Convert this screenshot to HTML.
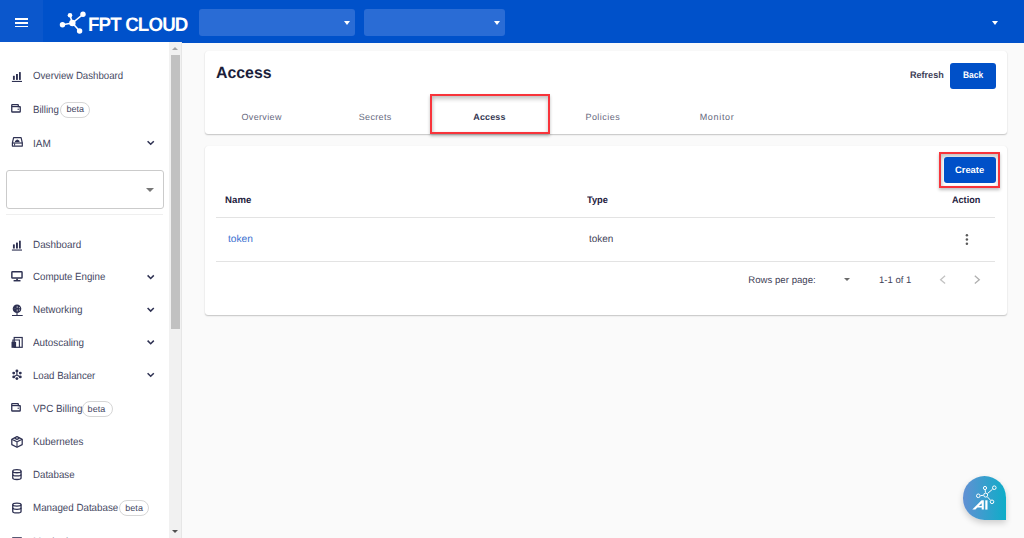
<!DOCTYPE html>
<html><head><meta charset="utf-8">
<style>
html,body{margin:0;padding:0;width:1024px;height:538px;overflow:hidden;background:#fafafa;font-family:"Liberation Sans",sans-serif;}
.t{position:absolute;white-space:nowrap;transform-origin:0 0;text-rendering:geometricPrecision;font-family:"Liberation Sans",sans-serif;}
.a{position:absolute;}
#hdr{left:0;top:0;width:1024px;height:42.5px;background:#0051ca;}
#ham{left:0;top:0;width:43px;height:42.5px;background:#0b57cc;}
.hl{position:absolute;left:14.9px;width:13.2px;height:1.7px;background:#fff;}
.dd{position:absolute;top:9px;height:27px;background:#2a6cd5;border-radius:3px;}
.tri{position:absolute;width:0;height:0;border-left:3.5px solid transparent;border-right:3.5px solid transparent;border-top:4px solid #fff;}
#side{left:0;top:42px;width:169px;height:496px;background:#fff;}
#track{left:169px;top:42px;width:12px;height:496px;background:#f1f1f1;}
#sbline{left:181px;top:42px;width:1px;height:496px;background:#e6e6e6;}
#thumb{left:171px;top:55px;width:9px;height:274px;background:#c1c1c1;}
.card{position:absolute;background:#fff;border-radius:3px;box-shadow:0 1px 1.5px rgba(0,0,0,0.22),0 0 1px rgba(0,0,0,0.07);}
.badge{position:absolute;height:14px;border:1px solid #d6d6d6;border-radius:8px;background:#fff;}
.btn{position:absolute;background:#0050c8;border-radius:3px;}
.red{position:absolute;border:2px solid #f8343b;box-sizing:border-box;box-shadow:0 2px 3px rgba(0,0,0,0.25), inset 0 3px 4px rgba(0,0,0,0.22), inset 2px 0 3px rgba(0,0,0,0.05);}
.hr{position:absolute;height:1px;background:#e3e3e3;}
.ic{position:absolute;}
</style></head><body>
<div id="hdr" class="a"></div>
<div id="ham" class="a">
  <div class="hl" style="top:18.3px"></div><div class="hl" style="top:21.95px"></div><div class="hl" style="top:25.5px"></div>
</div>
<!-- logo -->
<svg class="ic" style="left:55px;top:5px" width="40" height="32" viewBox="55 5 40 32">
  <g stroke="#fff" stroke-width="1.6" fill="none">
    <line x1="72.4" y1="23" x2="62.5" y2="24.8"/>
    <line x1="72.4" y1="23" x2="70" y2="15.3"/>
    <line x1="72.4" y1="23" x2="83" y2="14.3"/>
    <line x1="72.4" y1="23" x2="79.6" y2="31"/>
  </g>
  <g fill="#fff">
    <circle cx="72.4" cy="23" r="3.2"/>
    <circle cx="62.5" cy="24.8" r="2.7"/>
    <circle cx="70" cy="15.3" r="2.3"/>
    <circle cx="83" cy="14.3" r="2.7"/>
    <circle cx="79.6" cy="31" r="2.7"/>
  </g>
</svg>
<div class="t" style="left:88.3px;top:14.7px;font-size:19.5px;line-height:20px;font-weight:700;color:#fff;letter-spacing:-0.9px;transform:scaleX(0.962)">FPT CLOUD</div>
<div class="dd" style="left:199px;width:156px"></div>
<div class="tri" style="left:343.5px;top:21px"></div>
<div class="dd" style="left:364px;width:141px"></div>
<div class="tri" style="left:493.5px;top:21px"></div>
<div class="tri" style="left:992px;top:21px"></div>

<div id="side" class="a"></div>
<div id="track" class="a"></div>
<div id="sbline" class="a"></div>
<div id="thumb" class="a"></div>
<div class="a" style="left:172.1px;top:47.4px;width:0;height:0;border-left:3.2px solid transparent;border-right:3.2px solid transparent;border-bottom:3.4px solid #a3a3a3"></div>
<div class="a" style="left:172.1px;top:529.6px;width:0;height:0;border-left:3.2px solid transparent;border-right:3.2px solid transparent;border-top:3.4px solid #505050"></div>

<!-- sidebar select -->
<div class="a" style="left:6px;top:170px;width:156px;height:37px;border:1px solid #cbcbcb;border-radius:3px;"></div>
<div class="a" style="left:146px;top:187.5px;width:0;height:0;border-left:4px solid transparent;border-right:4px solid transparent;border-top:4px solid #777"></div>
<div class="hr" style="left:6px;top:213.8px;width:157px;height:1.6px;background:#efefef"></div>

<div class="badge" style="left:60.4px;top:101.5px;width:28px"></div>
<div class="badge" style="left:81.6px;top:400.9px;width:29px"></div>
<div class="badge" style="left:119.3px;top:499.8px;width:28px"></div>

<svg class="ic" style="left:0;top:0" width="170" height="538" viewBox="0 0 170 538"><rect x="12.95" y="75.8" width="1.85" height="4.1000000000000085" fill="#2e3152"/><rect x="16.0" y="74.0" width="1.9" height="5.900000000000006" fill="#2e3152"/><rect x="19.0" y="72.1" width="1.8" height="7.800000000000011" fill="#2e3152"/><rect x="11.9" y="80.9" width="10.1" height="1.1" fill="#2e3152"/><g transform="translate(0,0)"><path d="M11.75 106 V111.4 Q11.75 112 12.4 112 H19.6 Q20.25 112 20.25 111.4 V107.3 Q20.25 106.7 19.6 106.7 H18.3 V105.1 Q18.3 104.55 17.7 104.55 H12.4 Q11.75 104.55 11.75 105.1 Z" fill="none" stroke="#2e3152" stroke-width="1.3"/><line x1="11.75" y1="106.6" x2="20.2" y2="106.6" stroke="#2e3152" stroke-width="1.2"/><circle cx="18.2" cy="109.2" r="0.7" fill="#2e3152"/></g><path d="M13.6 137.6 H21.1 L22.3 142.9 V146.1 H12.4 V142.9 Z" fill="none" stroke="#2e3152" stroke-width="1.2" stroke-linejoin="round"/><line x1="12.4" y1="143" x2="22.3" y2="143" stroke="#2e3152" stroke-width="1.2"/><rect x="14.1" y="143.4" width="1.0" height="2.3" fill="#2e3152"/><path d="M14.9 141.9 Q14.9 140.3 16.2 140.2 Q17.0 138.8 18.3 139.9 Q19.8 140.2 19.6 141.9 Z" fill="#2e3152"/><rect x="12.95" y="244.39999999999998" width="1.85" height="4.1000000000000085" fill="#2e3152"/><rect x="16.0" y="242.6" width="1.9" height="5.900000000000006" fill="#2e3152"/><rect x="19.0" y="240.7" width="1.8" height="7.800000000000011" fill="#2e3152"/><rect x="11.9" y="249.5" width="10.1" height="1.1" fill="#2e3152"/><rect x="11.85" y="271.8" width="10.2" height="6.3" rx="0.7" fill="none" stroke="#2e3152" stroke-width="1.45"/><rect x="16.2" y="278.6" width="1.7" height="1.5" fill="#2e3152"/><rect x="13.6" y="280.0" width="6.9" height="1.45" fill="#2e3152"/><circle cx="17.0" cy="308.7" r="4.3" fill="#2e3152"/><path d="M17.2 306.2 V307.9 M17.2 309.5 V311.4 M19.4 307.0 V308.2 M19.4 309.4 V310.6" stroke="#fff" stroke-width="0.8" opacity="0.85"/><path d="M13.6 308.7 H16.2" stroke="#fff" stroke-width="0.4" opacity="0.35"/><path d="M17.0 312.8 V315.2 M12.0 315.5 H22.7" stroke="#2e3152" stroke-width="1.1"/><rect x="14.2" y="337.5" width="8.0" height="9.8" fill="none" stroke="#2e3152" stroke-width="1.2"/><path d="M12.9 347.3 V340 H19.4 V347.3" fill="none" stroke="#2e3152" stroke-width="1.1"/><rect x="11.5" y="341.8" width="4.6" height="6.0" fill="#2e3152"/><path d="M16.9 370.9 V375 M13.7 376.9 L16.9 375 L20.3 376.9" stroke="#2e3152" stroke-width="1.1" fill="none"/><circle cx="16.9" cy="370.9" r="1.45" fill="#2e3152"/><circle cx="13.7" cy="373.1" r="1.45" fill="#2e3152"/><circle cx="20.3" cy="373.1" r="1.45" fill="#2e3152"/><circle cx="13.7" cy="376.9" r="1.45" fill="#2e3152"/><circle cx="20.3" cy="376.9" r="1.45" fill="#2e3152"/><circle cx="16.9" cy="378.6" r="1.45" fill="#2e3152"/><g transform="translate(0,299.0)"><path d="M11.75 106 V111.4 Q11.75 112 12.4 112 H19.6 Q20.25 112 20.25 111.4 V107.3 Q20.25 106.7 19.6 106.7 H18.3 V105.1 Q18.3 104.55 17.7 104.55 H12.4 Q11.75 104.55 11.75 105.1 Z" fill="none" stroke="#2e3152" stroke-width="1.3"/><line x1="11.75" y1="106.6" x2="20.2" y2="106.6" stroke="#2e3152" stroke-width="1.2"/><circle cx="18.2" cy="109.2" r="0.7" fill="#2e3152"/></g><path d="M17.0 436.6 L22.2 439.3 V444.6 L17.0 447.2 L11.8 444.6 V439.3 Z" fill="none" stroke="#2e3152" stroke-width="1.25" stroke-linejoin="round"/><path d="M11.8 439.3 L17.0 442 L22.2 439.3 M17.0 442 V447.2 M14.4 438 L19.6 440.6 M19.6 438 L14.4 440.6" fill="none" stroke="#2e3152" stroke-width="1.1"/><g transform="translate(0,0)" fill="none" stroke="#2e3152" stroke-width="1.3"><ellipse cx="16.9" cy="471.2" rx="4.15" ry="1.55"/><path d="M12.75 471.2 V478 Q12.75 479.5 16.9 479.5 Q21.05 479.5 21.05 478 V471.2"/><path d="M12.75 474.4 Q12.75 475.9 16.9 475.9 Q21.05 475.9 21.05 474.4"/><path d="M12.75 476.9 Q12.75 478.4 16.9 478.4 Q21.05 478.4 21.05 476.9" opacity="0"/></g><g transform="translate(0,33.4)" fill="none" stroke="#2e3152" stroke-width="1.3"><ellipse cx="16.9" cy="471.2" rx="4.15" ry="1.55"/><path d="M12.75 471.2 V478 Q12.75 479.5 16.9 479.5 Q21.05 479.5 21.05 478 V471.2"/><path d="M12.75 474.4 Q12.75 475.9 16.9 475.9 Q21.05 475.9 21.05 474.4"/><path d="M12.75 476.9 Q12.75 478.4 16.9 478.4 Q21.05 478.4 21.05 476.9" opacity="0"/></g><rect x="12.2" y="537.2" width="9.6" height="1.6" fill="#2e3152"/><polyline points="147.6,141.20000000000002 150.7,144.3 153.8,141.20000000000002" fill="none" stroke="#2e3152" stroke-width="1.5"/><polyline points="147.6,275.4 150.7,278.5 153.8,275.4" fill="none" stroke="#2e3152" stroke-width="1.5"/><polyline points="147.6,307.99999999999994 150.7,311.09999999999997 153.8,307.99999999999994" fill="none" stroke="#2e3152" stroke-width="1.5"/><polyline points="147.6,340.59999999999997 150.7,343.7 153.8,340.59999999999997" fill="none" stroke="#2e3152" stroke-width="1.5"/><polyline points="147.6,373.19999999999993 150.7,376.29999999999995 153.8,373.19999999999993" fill="none" stroke="#2e3152" stroke-width="1.5"/></svg>

<!-- cards -->
<div class="card" style="left:205px;top:51.3px;width:801.6px;height:83px"></div>
<div class="card" style="left:205px;top:146.2px;width:801.6px;height:169px"></div>
<div class="btn" style="left:950px;top:62.6px;width:45.5px;height:26.2px"></div>
<div class="red" style="left:430.3px;top:94.3px;width:119.6px;height:40px"></div>
<div class="red" style="left:939px;top:152.2px;width:61px;height:35.7px"></div>
<div class="btn" style="left:943.9px;top:157.1px;width:51.8px;height:25.9px"></div>
<div class="hr" style="left:216.3px;top:217px;width:779.2px"></div>
<div class="hr" style="left:216.3px;top:261px;width:779.2px"></div>
<svg class="ic" style="left:960px;top:230px" width="14" height="18">
  <circle cx="6.9" cy="5.2" r="1.25" fill="#5a5a5a"/><circle cx="6.9" cy="9.5" r="1.25" fill="#5a5a5a"/><circle cx="6.9" cy="13.8" r="1.25" fill="#5a5a5a"/>
</svg>
<div class="a" style="left:844px;top:278.2px;width:0;height:0;border-left:3px solid transparent;border-right:3px solid transparent;border-top:3.7px solid #6a6a6a"></div>
<svg class="ic" style="left:936px;top:272px" width="50" height="16">
  <polyline points="9.1,3.8 4.6,7.7 9.1,11.5" fill="none" stroke="#c2c2c2" stroke-width="1.3"/>
  <polyline points="38.8,3.8 43.3,7.7 38.8,11.5" fill="none" stroke="#b0b0b0" stroke-width="1.3"/>
</svg>

<!-- AI button -->
<div class="a" style="left:962.5px;top:475.9px;width:43.7px;height:43.9px;border-radius:22px 22px 0 22px;background:linear-gradient(90deg,#6290d3,#0eadc8);box-shadow:0 3px 6px rgba(0,0,0,0.18)"></div>
<svg class="ic" style="left:962px;top:475px" width="45" height="45" viewBox="962 475 45 45">
  <g stroke="#fff" stroke-width="1" fill="none"><circle cx="985.7" cy="495.1" r="2.0"/><circle cx="985.0" cy="488.0" r="1.6"/><circle cx="994.3" cy="487.7" r="1.8"/><circle cx="978.3" cy="495.8" r="1.8"/><circle cx="992.0" cy="501.8" r="1.8"/><line x1="985.45" y1="492.61" x2="985.21" y2="490.09"/><line x1="987.60" y1="493.47" x2="992.56" y2="489.20"/><line x1="983.21" y1="495.34" x2="980.59" y2="495.58"/><line x1="987.41" y1="496.92" x2="990.42" y2="500.12"/></g>
  <path d="M972.3 509.6 L981.6 500.3 L983.8 500.3 L983.8 509.6 L981.7 509.6 L981.7 507.6 L977.4 507.6 L975.4 509.6 Z M978.9 506.0 L981.7 506.0 L981.7 503.2 Z" fill="#fff" fill-rule="evenodd"/>
  <rect x="985.3" y="500.3" width="2.2" height="9.3" fill="#fff"/>
</svg>

<div class="t" style="left:32.90px;top:72.00px;font-size:10.4px;line-height:10.4px;font-weight:400;color:#45475f;transform:scaleX(0.9286);">Overview Dashboard</div>
<div class="t" style="left:33.00px;top:106.00px;font-size:10.4px;line-height:10.4px;font-weight:400;color:#45475f;transform:scaleX(0.9305);">Billing</div>
<div class="t" style="left:32.90px;top:139.80px;font-size:10.4px;line-height:10.4px;font-weight:400;color:#45475f;transform:scaleX(0.9654);">IAM</div>
<div class="t" style="left:33.00px;top:241.00px;font-size:10.4px;line-height:10.4px;font-weight:400;color:#45475f;transform:scaleX(0.9500);">Dashboard</div>
<div class="t" style="left:33.10px;top:273.20px;font-size:10.4px;line-height:10.4px;font-weight:400;color:#45475f;transform:scaleX(0.9340);">Compute Engine</div>
<div class="t" style="left:33.00px;top:306.40px;font-size:10.4px;line-height:10.4px;font-weight:400;color:#45475f;transform:scaleX(0.9500);">Networking</div>
<div class="t" style="left:33.00px;top:338.60px;font-size:10.4px;line-height:10.4px;font-weight:400;color:#45475f;transform:scaleX(0.9500);">Autoscaling</div>
<div class="t" style="left:33.10px;top:371.80px;font-size:10.4px;line-height:10.4px;font-weight:400;color:#45475f;transform:scaleX(0.9297);">Load Balancer</div>
<div class="t" style="left:33.00px;top:405.40px;font-size:10.4px;line-height:10.4px;font-weight:400;color:#45475f;transform:scaleX(0.9500);">VPC Billing</div>
<div class="t" style="left:33.00px;top:438.20px;font-size:10.4px;line-height:10.4px;font-weight:400;color:#45475f;transform:scaleX(0.9500);">Kubernetes</div>
<div class="t" style="left:32.90px;top:471.00px;font-size:10.4px;line-height:10.4px;font-weight:400;color:#45475f;transform:scaleX(0.9351);">Database</div>
<div class="t" style="left:32.90px;top:504.20px;font-size:10.4px;line-height:10.4px;font-weight:400;color:#45475f;transform:scaleX(0.9393);">Managed Database</div>
<div class="t" style="left:66.40px;top:105.00px;font-size:9.0px;line-height:9.0px;font-weight:400;color:#45475f;letter-spacing:0.030px;">beta</div>
<div class="t" style="left:87.60px;top:405.00px;font-size:9.0px;line-height:9.0px;font-weight:400;color:#45475f;letter-spacing:0.030px;">beta</div>
<div class="t" style="left:125.30px;top:504.00px;font-size:9.0px;line-height:9.0px;font-weight:400;color:#45475f;letter-spacing:0.030px;">beta</div>
<div class="t" style="left:216.40px;top:65.00px;font-size:16.2px;line-height:16.2px;font-weight:700;color:#1b1e3a;transform:scaleX(0.9806);">Access</div>
<div class="t" style="left:910.10px;top:70.00px;font-size:9.4px;line-height:9.4px;font-weight:700;color:#3d4057;transform:scaleX(0.9664);">Refresh</div>
<div class="t" style="left:962.60px;top:70.00px;font-size:9.4px;line-height:9.4px;font-weight:700;color:#ffffff;transform:scaleX(0.9009);">Back</div>
<div class="t" style="left:241.50px;top:113.00px;font-size:9.0px;line-height:9.0px;font-weight:400;color:#65687d;letter-spacing:0.342px;">Overview</div>
<div class="t" style="left:358.80px;top:113.00px;font-size:9.0px;line-height:9.0px;font-weight:400;color:#65687d;letter-spacing:0.315px;">Secrets</div>
<div class="t" style="left:473.30px;top:113.00px;font-size:9.0px;line-height:9.0px;font-weight:700;color:#343752;letter-spacing:0.136px;">Access</div>
<div class="t" style="left:585.40px;top:113.00px;font-size:9.0px;line-height:9.0px;font-weight:400;color:#65687d;letter-spacing:0.484px;">Policies</div>
<div class="t" style="left:699.70px;top:113.00px;font-size:9.0px;line-height:9.0px;font-weight:400;color:#65687d;letter-spacing:0.681px;">Monitor</div>
<div class="t" style="left:33.00px;top:538.00px;font-size:10.4px;line-height:10.4px;font-weight:400;color:#45475f;transform:scaleX(0.9500);">Monitoring</div>
<div class="t" style="left:955.10px;top:165.00px;font-size:9.4px;line-height:9.4px;font-weight:700;color:#ffffff;transform:scaleX(0.9976);">Create</div>
<div class="t" style="left:225.00px;top:196.00px;font-size:9.6px;line-height:9.6px;font-weight:700;color:#1f2240;letter-spacing:0.069px;">Name</div>
<div class="t" style="left:587.00px;top:196.00px;font-size:9.6px;line-height:9.6px;font-weight:700;color:#1f2240;transform:scaleX(0.9652);">Type</div>
<div class="t" style="left:951.60px;top:196.00px;font-size:9.6px;line-height:9.6px;font-weight:700;color:#1f2240;transform:scaleX(0.9472);">Action</div>
<div class="t" style="left:227.90px;top:235.00px;font-size:10.2px;line-height:10.2px;font-weight:400;color:#3b6fd0;letter-spacing:0.036px;">token</div>
<div class="t" style="left:589.30px;top:235.00px;font-size:10.2px;line-height:10.2px;font-weight:400;color:#3f4257;transform:scaleX(0.9771);">token</div>
<div class="t" style="left:748.20px;top:276.00px;font-size:9.6px;line-height:9.6px;font-weight:400;color:#3f4257;letter-spacing:0.029px;">Rows per page:</div>
<div class="t" style="left:878.60px;top:276.00px;font-size:9.6px;line-height:9.6px;font-weight:400;color:#3f4257;transform:scaleX(0.9939);">1-1 of 1</div>
</body></html>
